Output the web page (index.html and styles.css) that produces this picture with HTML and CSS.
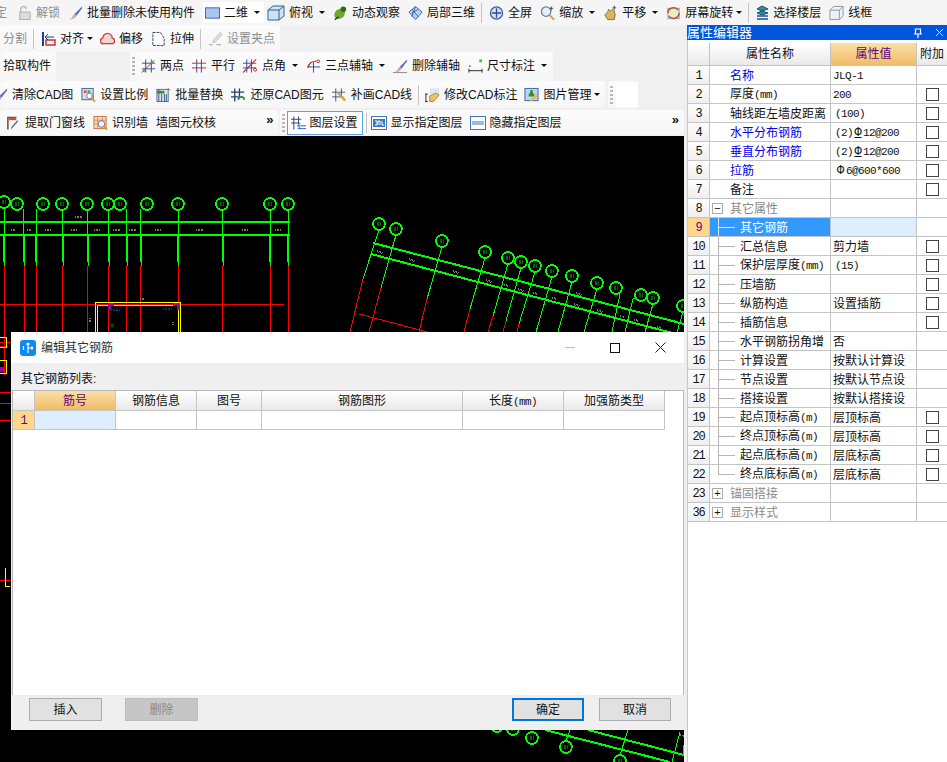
FILE: index.html
```html
<!DOCTYPE html>
<html lang="zh-CN">
<head>
<meta charset="utf-8">
<title>属性编辑器</title>
<link rel="stylesheet" href="styles.css">
</head>
<body>
<header class="row row1">
  <span class="lbl off clipstart">定</span>
  <span class="tool m2"><svg class="ic" viewBox="0 0 16 16"><path d="M4 7V4a3 3 0 0 1 6 0" fill="none" stroke="#bbb" stroke-width="1.5"/><rect x="3" y="7" width="11" height="8" fill="#ddd" stroke="#aaa"/></svg><span class="off">解锁</span></span>
  <span class="tool"><svg class="ic" viewBox="0 0 16 16"><path d="M15 1 7 9l2 2 6-8z" fill="#4a6fc0"/><path d="M7 9c-2 1-2 3-3 4l-3 2c3 0 7-1 8-4z" fill="#d8a8a0"/></svg>批量删除未使用构件</span>
  <span class="tool active-w"><svg class="ic" viewBox="0 0 16 16"><rect x=".5" y="2.5" width="15" height="11" fill="#a9c6ee" stroke="#3b62b0"/></svg>二维<i class="caret"></i></span>
  <span class="tool"><svg class="ic w18" viewBox="0 0 18 16"><path d="M1 5l5-4h11v10l-5 4H1z" fill="#cfe3f2" stroke="#35618a"/><path d="M1 5h11v10M12 5l5-4" fill="none" stroke="#35618a"/></svg>俯视<i class="caret"></i></span>
  <span class="tool"><svg class="ic" viewBox="0 0 16 16"><ellipse cx="7" cy="9" rx="6" ry="5" fill="#6fa82c" transform="rotate(-40 7 9)"/><circle cx="11" cy="4" r="3" fill="#2e6b1a"/><path d="M2 15l4-3" stroke="#334" stroke-width="1.5"/></svg>动态观察</span>
  <span class="tool"><svg class="ic" viewBox="0 0 16 16"><path d="M1 7l7-6 7 6-7 8z" fill="#bcd3ef" stroke="#3c63a8"/><path d="M4 4l7 8M8 1l-4 11M11 4l-7 4" stroke="#3c63a8" fill="none"/></svg>局部三维</span>
  <i class="sep"></i>
  <span class="tool m2"><svg class="ic" viewBox="0 0 16 16"><circle cx="8" cy="8" r="6.5" fill="#d6e2f3" stroke="#445f98" stroke-width="1.4"/><path d="M8 3v10M3 8h10" stroke="#2d4aa0" stroke-width="1.4"/></svg>全屏</span>
  <span class="tool"><svg class="ic" viewBox="0 0 16 16"><circle cx="6.5" cy="6.5" r="5" fill="#e6eef8" stroke="#6e8096" stroke-width="1.4"/><path d="M10 10l5 5" stroke="#c7a13c" stroke-width="2"/><path d="M12 1v4M10 3h4" stroke="#445"/></svg>缩放<i class="caret"></i></span>
  <span class="tool"><svg class="ic" viewBox="0 0 16 16"><path d="M2 10l3-3 1-3 2 2 2-2 2 2 1 4-1 5H5z" fill="#d9b563" stroke="#8b6d2b"/><path d="M12 0v5M10 2.500h4" stroke="#445"/></svg>平移<i class="caret"></i></span>
  <span class="tool"><svg class="ic" viewBox="0 0 16 16"><rect x="2" y="3" width="12" height="11" fill="#e7efc4" stroke="#7aa"/><path d="M2 8a6 6 0 0 1 11-3M14 8a6 6 0 0 1-11 3" fill="none" stroke="#d33" stroke-width="1.5"/></svg>屏幕旋转<i class="caret tight"></i></span>
  <i class="sep"></i>
  <span class="tool m2"><svg class="ic w13" viewBox="0 0 13 16"><path d="M1 4l5-3 6 3-6 2zM1 8l5-2 6 2-6 2z" fill="#2f8f8f" stroke="#1c4f86"/><path d="M1 11h11M1 14h11" stroke="#1c4f86" stroke-width="1.500"/></svg>选择楼层</span>
  <span class="tool"><svg class="ic" viewBox="0 0 16 16"><path d="M1 5l4-4h10v10l-4 4H1zM1 5h10v10M11 5l4-4" fill="#eef2f6" stroke="#8795a6"/></svg>线框</span>
</header>

<div class="main">
  <div class="left">
    <div class="row row2">
      <div class="piece p2">
        <span class="lbl off">分割</span>
        <i class="sep"></i>
        <span class="tool m3"><svg class="ic w14" viewBox="0 0 14 16"><path d="M1 1v14" stroke="#1f3e90" stroke-width="2"/><rect x="4" y="9" width="9" height="5" fill="none" stroke="#c22" stroke-width="1.400"/><path d="M3 6h9M6 3 3 6l3 3" fill="none" stroke="#1f3e90"/></svg>对齐<i class="caret tight"></i></span>
        <span class="tool mn1"><svg class="ic" viewBox="0 0 16 16"><path d="M4 13a3 3 0 0 1-1-6 5 5 0 0 1 10 0 3 3 0 0 1-1 6z" fill="#f4d4d0" stroke="#c4413c" stroke-width="1.400"/></svg>偏移</span>
        <span class="tool"><svg class="ic" viewBox="0 0 16 16"><path d="M2 1h8l4 6v8H2z" fill="#fff" stroke="#223b6a" stroke-dasharray="3 1"/></svg>拉伸</span>
        <i class="sep"></i>
        <span class="tool off m2"><svg class="ic" viewBox="0 0 16 16"><path d="M13 1l2 2-7 8-3 1 1-3z" fill="#ddd" stroke="#bbb"/><path d="M1 14h4M9 14h5" stroke="#aaa" stroke-width="1.500"/></svg>设置夹点</span>
      </div>
    </div>

    <div class="row row3">
      <div class="piece p3a"><span class="lbl">拾取构件</span></div>
      <div class="piece p3b">
        <i class="grip"></i>
        <span class="tool"><svg class="ic" viewBox="0 0 16 16"><path d="M5 1v14M11 1v14M1 5h14M1 11h14" stroke="#2b4a9c" fill="none"/><path d="M1 15 14 2" stroke="#c22"/><circle cx="3" cy="13" r="1.500" fill="#6a3"/><circle cx="12" cy="4" r="1.500" fill="#6a3"/></svg>两点</span>
        <span class="tool"><svg class="ic" viewBox="0 0 16 16"><path d="M5 1v14M10 1v14" stroke="#2b4a9c" fill="none"/><path d="M0 5h15M0 10h15" stroke="#c22" fill="none"/></svg>平行</span>
        <span class="tool"><svg class="ic" viewBox="0 0 16 16"><path d="M4 1v14M9 1v14M0 5h14M0 10h14" stroke="#2b4a9c" fill="none"/><path d="M0 15 14 1" stroke="#c22" stroke-width="1.200"/><circle cx="13" cy="12" r="1.500" fill="none" stroke="#c22"/></svg>点角<i class="caret"></i></span>
        <span class="tool"><svg class="ic" viewBox="0 0 16 16"><path d="M2 10a8 8 0 0 1 9-7" fill="none" stroke="#c22" stroke-width="1.300"/><path d="M8 4v11M2 9h13" stroke="#2b4a9c" fill="none"/><circle cx="13" cy="3" r="1.500" fill="none" stroke="#c22"/></svg>三点辅轴<i class="caret"></i></span>
        <span class="tool"><svg class="ic" viewBox="0 0 16 16"><path d="M15 1 7 9l2 2 6-8z" fill="#5a6fc0"/><path d="M7 9c-2 1-2 3-3 4l-3 2c3 0 7-1 8-4z" fill="#d8a8b0"/><path d="M0 15h15" stroke="#888"/></svg>删除辅轴</span>
        <span class="tool"><svg class="ic" viewBox="0 0 16 16"><rect x="1" y="7" width="2" height="2" fill="#3c3"/><rect x="12" y="1" width="3" height="3" fill="#3c3"/><path d="M1 11v4M15 11v4M1 13h14" stroke="#222"/></svg>尺寸标注<i class="caret"></i></span>
      </div>
    </div>

    <div class="row row4">
      <div class="piece p4a">
        <span class="tool first4"><svg class="ic" viewBox="0 0 16 16"><path d="M15 1 7 9l2 2 6-8z" fill="#5a6fc0"/><path d="M7 9c-2 1-2 3-3 4l-3 2c3 0 7-1 8-4z" fill="#c89ab0"/></svg>清除CAD图</span>
        <span class="tool"><svg class="ic" viewBox="0 0 16 16"><rect x="1" y="1" width="12" height="12" fill="#cfe0f4" stroke="#3c63a8"/><rect x="3" y="3" width="3" height="3" fill="#d55"/><rect x="7" y="3" width="3" height="3" fill="#5a5"/><circle cx="9" cy="9" r="3" fill="#fff" stroke="#778"/><path d="M11 11l4 4" stroke="#c7a13c" stroke-width="2"/></svg>设置比例</span>
        <span class="tool"><svg class="ic" viewBox="0 0 16 16"><rect x="1" y="2" width="12" height="13" fill="#dfe8ee" stroke="#667"/><path d="M3 2v13M6 7v8M9 7v8M11 7v8" stroke="#2c5a80"/><path d="M1 5h8" stroke="#3a8a4a" stroke-width="3"/><path d="M13 1l2 2" stroke="#444"/></svg>批量替换</span>
        <span class="tool"><svg class="ic" viewBox="0 0 16 16"><path d="M4 1v14M9 1v9M0 5h14M0 10h8" stroke="#24406e" stroke-width="1.400" fill="none"/><path d="M8 13a3 3 0 0 1 6 0" fill="none" stroke="#2e8f2e" stroke-width="2"/></svg>还原CAD图元</span>
        <span class="tool"><svg class="ic" viewBox="0 0 16 16"><path d="M4 1v14M10 1v9M0 5h14M0 10h12" stroke="#35558e" fill="none"/><path d="M6 5l8 9" stroke="#d2a24a" stroke-width="2.500"/></svg>补画CAD线</span>
        <i class="sep"></i>
        <span class="tool m1"><svg class="ic" viewBox="0 0 16 16"><path d="M5 1h10v6H5z" fill="#d8e6f8"/><path d="M5 9l7-3 3 2-6 7H5z" fill="#e9c56a" stroke="#a8852a"/><path d="M1 7v8M0 7h3M0 15h3" stroke="#222"/></svg>修改CAD标注</span>
        <span class="tool mn1"><svg class="ic" viewBox="0 0 16 16"><rect x="1" y="1" width="14" height="13" fill="#bcd6f2" stroke="#3c63a8"/><path d="M8 3v5M5 8h6" stroke="#3d8b2a" stroke-width="3"/><path d="M6 14l7-7 2 2-7 6z" fill="#e3b44a"/></svg>图片管理<i class="caret tight"></i></span>
      </div>
      <div class="piece p4b"><i class="grip"></i><span class="blank"></span></div>
    </div>

    <div class="row row5">
      <div class="piece p5a">
        <span class="tool"><svg class="ic" viewBox="0 0 16 16"><path d="M2 15V2h9" fill="none" stroke="#7a3b20" stroke-width="1.500"/><rect x="3" y="2" width="8" height="3" fill="#c0562a"/><path d="M13 6 7 13l-2 2 1-3 6-7z" fill="#4668b8"/></svg>提取门窗线</span>
        <span class="tool"><svg class="ic" viewBox="0 0 16 16"><rect x="1" y="1" width="13" height="13" fill="#f6dcc0" stroke="#c96f3c"/><path d="M1 5h13M1 9h13M5 1v13M10 1v13" stroke="#d98c5a"/><circle cx="9" cy="9" r="3.500" fill="#eef" stroke="#778"/><path d="M11 11l4 4" stroke="#c7a13c" stroke-width="2"/></svg>识别墙</span>
        <span class="lbl">墙图元校核</span>
        <span class="more">»</span>
      </div>
      <div class="piece p5b">
        <i class="grip"></i>
        <span class="tool pressed"><svg class="ic" viewBox="0 0 16 16"><path d="M3 1v14M8 1v8M0 4h11M0 8h9" stroke="#24406e" fill="none"/><path d="M7 11h9M7 14h9M10 8 7 11l3 3" stroke="#2b5fc0" fill="none"/></svg>图层设置</span>
        <i class="sep"></i>
        <span class="tool"><svg class="ic w16" viewBox="0 0 16 16"><rect x=".5" y="1.500" width="15" height="13" fill="#fff" stroke="#3c78c0"/><rect x="2" y="4" width="12" height="8" fill="#3c78c0"/><path d="M4 6h2v4H4M7 10V6h2v4M11 6v4h2" fill="none" stroke="#fff"/></svg>显示指定图层</span>
        <span class="tool m3"><svg class="ic w16" viewBox="0 0 16 16"><rect x=".5" y="1.500" width="15" height="13" fill="#fff" stroke="#3c78c0"/><rect x="2" y="6" width="12" height="4" fill="#9db9dd"/></svg>隐藏指定图层</span>
        <span class="more">»</span>
      </div>
    </div>

    <div class="canvas">
      <svg class="cad" viewBox="0 136 684 626" width="684" height="626">
        <g class="g th2">
          <path d="M0 222H290M0 235H290"/>
          <path d="M4 235V262M24 235V262M36 235V262M63 235V262M88 235V262M109 235V262M127 235V262M141 235V262M178 235V262M223 235V262M270 235V262M288 235V262"/>
        </g>
        <g class="g">
          <path d="M4 208V235M23 209V235M36 209V235M62 210V235M87 210V235M108 210V235M126 209V235M140 209V235M178 210V235M222 210V235M270 210V235M288 210V235"/>
          <path d="M4 262V266M24 262V266M36 262V266M63 262V266M88 262V266M109 262V266M127 262V266M141 262V266M178 262V266M223 262V266M270 262V266M288 262V266"/>
        </g>
        <g class="r">
          <path d="M4 266V375M24 266V332M36 266V332M62 266V332M87 266V332M108 266V332M126 266V332M140 266V332M178 266V332M222 266V332M270 266V332M288 266V332"/>
          <path d="M0 304H284M0 392H11M0 403H11M0 420H11M0 342H11M0 346H8M0 580H11"/>
          <path d="M363 279 350 332M381 288 369 332M427 299 419 332M470 309 464 332M493 316 488 332M506 321 503 332M519 324 517 332M359 314 427 332"/>
        </g>
        <g class="y">
          <path d="M95 332V302H180V332M97 332V305H178V332"/>
          <path d="M0 337H6V347H0M0 360H6V373H0M5 568V586H10"/>
        </g>
        <path class="m" d="M108 303h6v3h-3v4h-3zM173 303h7v7h-3v-4h-4zM0 367h4v5H0z"/>
        <g class="g">
          <path d="M379 230 363 279M396 235 381 288M442 247 427 299M485 258 470 309M508 264 493 316M521 268 506 321M535 272 519 324M552 277 536 332M572 282 558 332M597 289 584 332M620 294 612 332M641 295 633 299 625 332M653 304 645 332M683 312 677 332"/>
          <path d="M570 730 566 741M628 730 620 755M680 732 672 762M683 745V756"/>
        </g>
        <g class="g th15">
          <path d="M373 243 684 324M371 254 684 336"/>
          <path d="M545 730 670 762M588 730 684 755"/>
        </g>
        <g class="bub">
          <circle cx="4" cy="202" r="6"/><circle cx="17" cy="204" r="6"/><circle cx="43" cy="204" r="6"/><circle cx="62" cy="204" r="6"/><circle cx="87" cy="204" r="6"/><circle cx="108" cy="204" r="6"/><circle cx="120" cy="204" r="6"/><circle cx="147" cy="204" r="6"/><circle cx="178" cy="204" r="6"/><circle cx="222" cy="204" r="6"/><circle cx="270" cy="204" r="6"/><circle cx="288" cy="204" r="6"/>
          <circle cx="379" cy="224" r="6"/><circle cx="396" cy="229" r="6"/><circle cx="442" cy="241" r="6"/><circle cx="485" cy="252" r="6"/><circle cx="508" cy="258" r="6"/><circle cx="521" cy="262" r="6"/><circle cx="535" cy="266" r="6"/><circle cx="552" cy="271" r="6"/><circle cx="572" cy="276" r="6"/><circle cx="597" cy="283" r="6"/><circle cx="616" cy="288" r="6"/><circle cx="641" cy="295" r="6"/><circle cx="653" cy="298" r="6"/><circle cx="683" cy="306" r="6"/>
          <circle cx="497" cy="726" r="6"/><circle cx="513" cy="729" r="6"/><circle cx="532" cy="738" r="6"/><circle cx="566" cy="747" r="6"/><circle cx="620" cy="761" r="6"/>
        </g>
        <path class="blob" d="M2 202h4M15 204h4M41 204h4M60 204h4M85 204h4M106 204h4M118 204h4M145 204h4M176 204h4M220 204h4M268 204h4M286 204h4M377 224h4M394 229h4M440 241h4M483 252h4M506 258h4M519 262h4M533 266h4M550 271h4M570 276h4M595 283h4M614 288h4M639 295h4M651 298h4M681 306h4M495 726h4M511 729h4M530 738h4M564 747h4M618 761h4"/>
        <path class="noise" d="M11 230h5M27 230h4M45 230h6M71 230h6M94 230h6M113 230h7M129 230h7M155 230h6M196 230h7M242 230h6M275 230h6M75 217h8M140 299h4M90 318v5M173 322v3M377 251l6 2M409 259l6 2M453 271l6 2M486 280l6 2M504 285l5 1M518 289l6 2M533 293l5 1M552 298l5 1M576 293l6 2M574 304l6 2M597 310l6 2M620 316l4 1M634 320l5 1M657 327l5 1M647 726l5 1M680 735l4 1"/>
        <path class="noise blue" d="M111 310h9M163 309h9"/>
        <path class="noise dk" d="M112 324v3"/>
      </svg>
    </div>
  </div>

  <div class="split"></div>

  <aside class="panel">
    <div class="ptitle">
      <span class="ptext">属性编辑器</span>
      <svg class="pin" viewBox="0 0 10 10" width="10" height="10"><path d="M2.500 1h5v5h-5zM1 6h8M5 6v4" fill="none" stroke="#fff" stroke-width="1.200"/></svg>
      <svg class="pclose" viewBox="0 0 9 9" width="9" height="9"><path d="M1 1l7 7M8 1 1 8" stroke="#cfe0ff"/></svg>
    </div>
    <table class="ptable">
      <colgroup><col class="c0"><col class="c1"><col class="c2"><col class="c3"></colgroup>
      <thead><tr><th></th><th>属性名称</th><th class="hot">属性值</th><th>附加</th></tr></thead>
      <tbody>
        <tr><td class="n"><b>1</b></td><td class="nm blue">名称</td><td class="v"><span class="la">JLQ-1</span></td><td></td></tr>
        <tr><td class="n"><b>2</b></td><td class="nm">厚度<span class="la">(mm)</span></td><td class="v"><span class="la">200</span></td><td class="x"><i class="chk"></i></td></tr>
        <tr><td class="n"><b>3</b></td><td class="nm">轴线距左墙皮距离</td><td class="v ind"><span class="la">(100)</span></td><td class="x"><i class="chk"></i></td></tr>
        <tr><td class="n"><b>4</b></td><td class="nm blue">水平分布钢筋</td><td class="v ind"><span class="la">(2)<u class="bar">Φ</u>12@200</span></td><td class="x"><i class="chk"></i></td></tr>
        <tr><td class="n"><b>5</b></td><td class="nm blue">垂直分布钢筋</td><td class="v ind"><span class="la">(2)<u class="bar">Φ</u>12@200</span></td><td class="x"><i class="chk"></i></td></tr>
        <tr><td class="n"><b>6</b></td><td class="nm blue">拉筋</td><td class="v ind"><span class="la"><span class="bar first">Φ</span>6@600*600</span></td><td class="x"><i class="chk"></i></td></tr>
        <tr><td class="n"><b>7</b></td><td class="nm">备注</td><td class="v"></td><td class="x"><i class="chk"></i></td></tr>
        <tr><td class="n"><b>8</b></td><td class="grp"><i class="box">−</i>其它属性</td><td></td><td></td></tr>
        <tr class="sel"><td class="n"><b>9</b></td><td class="ch">其它钢筋</td><td class="v"></td><td></td></tr>
        <tr><td class="n"><b>10</b></td><td class="ch">汇总信息</td><td class="v">剪力墙</td><td class="x"><i class="chk"></i></td></tr>
        <tr><td class="n"><b>11</b></td><td class="ch">保护层厚度<span class="la">(mm)</span></td><td class="v ind"><span class="la">(15)</span></td><td class="x"><i class="chk"></i></td></tr>
        <tr><td class="n"><b>12</b></td><td class="ch">压墙筋</td><td class="v"></td><td class="x"><i class="chk"></i></td></tr>
        <tr><td class="n"><b>13</b></td><td class="ch">纵筋构造</td><td class="v">设置插筋</td><td class="x"><i class="chk"></i></td></tr>
        <tr><td class="n"><b>14</b></td><td class="ch">插筋信息</td><td class="v"></td><td class="x"><i class="chk"></i></td></tr>
        <tr><td class="n"><b>15</b></td><td class="ch">水平钢筋拐角增</td><td class="v">否</td><td></td></tr>
        <tr><td class="n"><b>16</b></td><td class="ch">计算设置</td><td class="v">按默认计算设</td><td></td></tr>
        <tr><td class="n"><b>17</b></td><td class="ch">节点设置</td><td class="v">按默认节点设</td><td></td></tr>
        <tr><td class="n"><b>18</b></td><td class="ch">搭接设置</td><td class="v">按默认搭接设</td><td></td></tr>
        <tr><td class="n"><b>19</b></td><td class="ch">起点顶标高<span class="la">(m)</span></td><td class="v">层顶标高</td><td class="x"><i class="chk"></i></td></tr>
        <tr><td class="n"><b>20</b></td><td class="ch">终点顶标高<span class="la">(m)</span></td><td class="v">层顶标高</td><td class="x"><i class="chk"></i></td></tr>
        <tr><td class="n"><b>21</b></td><td class="ch">起点底标高<span class="la">(m)</span></td><td class="v">层底标高</td><td class="x"><i class="chk"></i></td></tr>
        <tr><td class="n"><b>22</b></td><td class="ch last">终点底标高<span class="la">(m)</span></td><td class="v">层底标高</td><td class="x"><i class="chk"></i></td></tr>
        <tr><td class="n"><b>23</b></td><td class="grp closed"><i class="box">+</i>锚固搭接</td><td></td><td></td></tr>
        <tr><td class="n"><b>36</b></td><td class="grp closed"><i class="box">+</i>显示样式</td><td></td><td></td></tr>
      </tbody>
    </table>
  </aside>
</div>

<section class="dialog">
  <div class="dtitle">
    <svg class="dicon" viewBox="0 0 16 16" width="16" height="16"><rect width="16" height="16" rx="3" fill="#0d8bf2"/><path d="M8 3v10M8 8h5M3.500 6v4M8 3 6.500 4.500M8 3l1.500 1.500M13 8l-1.500-1.500M13 8l-1.500 1.500" fill="none" stroke="#fff" stroke-width="1.200"/></svg>
    <span class="dtext">编辑其它钢筋</span>
    <span class="wbtns">
      <i class="wmin"></i>
      <i class="wmax"></i>
      <svg class="wclose" viewBox="0 0 11 11" width="11" height="11"><path d="M.5.500l10 10M10.500.500l-10 10" stroke="#222"/></svg>
    </span>
  </div>
  <div class="dlabel">其它钢筋列表:</div>
  <div class="dgrid">
    <table class="gtable">
      <colgroup><col class="g0"><col class="g1"><col class="g1"><col class="g2"><col class="g3"><col class="g4"><col class="g4"></colgroup>
      <thead><tr><th></th><th class="hot">筋号</th><th>钢筋信息</th><th>图号</th><th>钢筋图形</th><th>长度<span class="la">(mm)</span></th><th>加强筋类型</th></tr></thead>
      <tbody><tr><td class="n cur"><b>1</b></td><td class="edit"></td><td></td><td></td><td></td><td></td><td></td></tr></tbody>
    </table>
  </div>
  <div class="dfoot">
    <button class="btn" type="button">插入</button>
    <button class="btn dis" type="button">删除</button>
    <button class="btn def" type="button">确定</button>
    <button class="btn end" type="button">取消</button>
  </div>
</section>
</body>
</html>
```
FILE: styles.css
```css
* { box-sizing: border-box; }
html, body { margin: 0; padding: 0; }
body {
  width: 947px;
  height: 762px;
  overflow: hidden;
  background: #f0f0f0;
  color: #111;
  font: 12px/16px "Liberation Sans", "Noto Sans CJK SC", sans-serif;
  position: relative;
}
i { font-style: normal; }

/* toolbars */
.row { display: flex; align-items: stretch; white-space: nowrap; overflow: hidden; }
.row1 { height: 25px; align-items: center; gap: 8px; background: #f5f5f5; }
.row2 { height: 27px; }
.row3 { height: 29px; }
.row4 { height: 27px; }
.row5 { height: 25px; margin-top: 2px; margin-bottom: 1px; }
.piece { display: flex; align-items: center; gap: 8px; background: linear-gradient(#fbfbfb, #f6f6f6); border-radius: 3px; }
.p2 { width: 280px; padding-left: 3px; }
.p3a { width: 56px; padding: 0 0 2px 3px; }
.p3b { width: 423px; margin-left: 74px; padding: 0 0 2px 2px; }
.p4a { width: 605px; }
.p4b { width: 30px; margin-left: 3px; padding-left: 2px; gap: 0; }
.blank { display: block; width: 24px; height: 24px; margin-left: 3px; background: #fff; }
.p5a { width: 278px; padding-left: 6px; padding-right: 4px; }
.p5b { width: 405px; margin-left: 2px; padding-left: 2px; gap: 4px; padding-right: 5px; }
.p3b > .grip { margin-right: -2px; }
.tool { display: inline-flex; align-items: center; gap: 4px; flex: none; }
.ic { display: block; width: 15px; height: 16px; flex: none; }
.w13 { width: 13px; }
.w14 { width: 14px; }
.w16 { width: 16px; }
.w18 { width: 18px; }
.lbl { flex: none; }
.off { color: #8e8e8e; }
.off svg { opacity: .9; }
.clipstart { margin-left: -5px; }
.m1 { margin-left: 1px; }
.m2 { margin-left: 2px; }
.m3 { margin-left: 3px; }
.mn1 { margin-left: -1px; }
.first4 { margin-left: -7px; }
.active-w { background: #fff; height: 21px; padding: 0 4px 0 2px; margin-right: -5px; }
.pressed { background: #fff; border: 1px solid #5aa2e0; height: 24px; padding: 0 3px; margin-left: -2px; width: 76px; }
.caret { display: block; width: 0; height: 0; margin-left: 2px; border: 3px solid transparent; border-top: 3px solid #111; border-bottom: 0; flex: none; }
.caret.tight { margin-left: -1px; }
.sep { display: block; width: 1px; height: 20px; background: #c4c4c4; margin: 0 -3px 0 -2px; flex: none; }
.p5b .sep { margin: 0 0 0 -1px; }
.grip { display: block; width: 3px; height: 18px; background: repeating-linear-gradient(#b9b9b9 0 2px, transparent 2px 4px); flex: none; }
.more { margin-left: auto; font: bold 13px/14px "Liberation Sans", sans-serif; padding-bottom: 6px; }

/* main frame */
.main { display: flex; height: 737px; }
.left { width: 684px; flex: none; }
.split { width: 3px; flex: none; background: #eeeeee; }
.canvas { height: 626px; background: #000; overflow: hidden; }
.cad { display: block; shape-rendering: crispEdges; }
.cad path, .cad circle { fill: none; }
.g { stroke: #00ff00; stroke-width: 1; }
.th2 { stroke-width: 2; }
.th15 { stroke-width: 2; }
.r { stroke: #ff0000; stroke-width: 1; }
.y { stroke: #ffff00; stroke-width: 1; }
.cad path.m { fill: #a000a0; }
.bub { stroke: #00ff00; stroke-width: 1.6; }
.cad .bub circle { fill: #000; }
.blob { stroke: #006600; stroke-width: 4; stroke-dasharray: 1.500 1; }
.noise { stroke: #777; stroke-width: 2; stroke-dasharray: 1 .6; }
.blue { stroke: #0a2a8a; }
.dk { stroke: #0a7a0a; }

/* property panel */
.panel { width: 260px; flex: none; background: #fff; border-left: 1px solid #c8c8c8; }
.ptitle { height: 15px; margin-left: -1px; display: flex; align-items: center; background: #0055dd; color: #fff; font-size: 13px; }
.ptext { flex: 1; line-height: 15px; }
.pin { margin-right: 12px; }
.pclose { margin-right: 3px; }
table { border-collapse: separate; border-spacing: 0; table-layout: fixed; }
.ptable { width: 259px; margin-top: 3px; }
.c0 { width: 22px; }
.c1 { width: 121px; }
.c2 { width: 86px; }
.c3 { width: 30px; }
th { font-weight: normal; background: linear-gradient(#ffffff, #e9e9e9); border-right: 1px solid #c4c4c4; border-bottom: 1px solid #c4c4c4; padding: 0; white-space: nowrap; overflow: hidden; }
.ptable th { height: 23px; }
.ptable th:last-child { border-right: 0; }
th.hot { background: linear-gradient(#fbe0a8, #f0bb66); color: #660080; }
td { height: 19px; padding: 1px 0 0; border-right: 1px solid #c4c4c4; border-bottom: 1px solid #c4c4c4; white-space: nowrap; overflow: hidden; line-height: 14px; position: relative; }
.ptable td:last-child { border-right: 0; }
.n { text-align: center; background: linear-gradient(#fdfdfd, #efefef); }
.n b { display: block; font: 12px/14px "Liberation Mono", monospace; letter-spacing: -1.2px; }
.la { font: 11px/14px "Liberation Mono", "Noto Sans CJK SC", monospace; letter-spacing: -.6px; }
.bar { display: inline-block; width: 10px; margin: 0; text-align: center; font-size: 12px; letter-spacing: 0; line-height: 12px; }
.bar.first { width: 11px; }
.nm { padding-left: 20px; }
.blue { color: #0000ee; }
.v { padding-left: 2px; }
.v.ind { padding-left: 4px; }
.x { vertical-align: top; padding-top: 0; }
.chk { display: block; width: 13px; height: 13px; margin: 3px auto 0; border: 1px solid #444; background: #fff; }
.grp { padding-left: 2px; color: #8a8a8a; }
.box { display: inline-block; width: 11px; height: 11px; margin-right: 7px; border: 1px solid #aaa; color: #111; text-align: center; font: 11px/9px "Liberation Sans", sans-serif; vertical-align: middle; margin-top: -2px; background: #fff; }
.ch { padding-left: 30px; }
.ch::before { content: ""; position: absolute; left: 8px; top: 0; bottom: 0; width: 1px; background: #b5b5b5; }
.ch::after { content: ""; position: absolute; left: 8px; top: 9px; width: 17px; height: 1px; background: #b5b5b5; }
.ch.last::before { bottom: 9px; }
.sel .n { background: #ffd78c; color: #660080; }
.sel .ch { background: #3399ff; color: #fff; }
.sel .ch::before, .sel .ch::after { background: #cfe6ff; }
.sel .v { background: #ddeeff; }

/* dialog */
.dialog { position: absolute; left: 11px; top: 332px; width: 673px; height: 398px; background: #efefef; display: flex; flex-direction: column; }
.dtitle { height: 31px; background: #fff; display: flex; align-items: center; padding-left: 9px; flex: none; }
.dicon { display: block; margin-right: 5px; }
.dtext { flex: 1; color: #333; }
.wbtns { display: flex; align-items: center; gap: 35px; padding-right: 18px; }
.wmin { display: block; width: 10px; height: 1px; background: #bbb; }
.wmax { display: block; width: 10px; height: 10px; border: 1px solid #111; }
.wclose { display: block; }
.dlabel { height: 27px; padding: 8px 0 0 10px; flex: none; }
.dgrid { flex: 1; margin-left: 1px; background: #fff; border: 1px solid #b8b8b8; border-bottom: 0; }
.gtable { width: 652px; }
.g0 { width: 22px; }
.g1 { width: 81px; }
.g2 { width: 65px; }
.g3 { width: 201px; }
.g4 { width: 101px; }
.gtable th { height: 20px; }
.cur { background: #ffd78c; color: #660080; }
.edit { background: #ddeeff; }
.dfoot { height: 35px; flex: none; display: flex; align-items: flex-start; padding: 3px 13px 0 18px; }
.btn { width: 73px; height: 23px; padding: 0; background: #e1e1e1; border: 1px solid #adadad; color: #111; font: inherit; }
.btn.dis { margin-left: 23px; background: #c6c6c6; border-color: #bdbdbd; color: #8a8a8a; }
.btn.def { width: 72px; margin-left: auto; margin-right: 15px; border: 2px solid #0078d7; }
.btn.end { width: 72px; }
```
